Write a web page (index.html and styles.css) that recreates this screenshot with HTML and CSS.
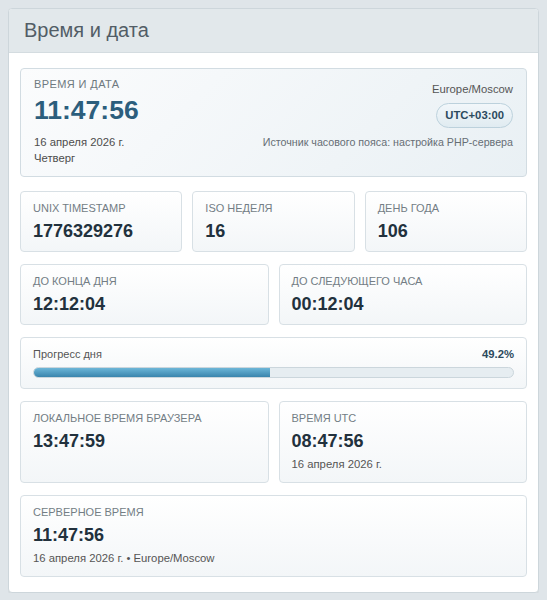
FILE: index.html
```html
<!DOCTYPE html>
<html lang="ru">
<head>
  <meta charset="UTF-8" />
  <title>Время и дата</title>
  <link rel="stylesheet" href="styles.css">
</head>
<body>
<div class="panel">
  <div class="panel-header">
    <h1>Время и дата</h1>
  </div>

  <div class="panel-body">
    <!-- главная карточка -->
    <div class="main-card">
      <div class="main-left">
        <div class="main-label">Время и дата</div>
        <div class="main-time">11:47:56</div>
        <div class="main-date">16 апреля 2026 г.</div>
        <div class="main-date">Четверг</div>
      </div>
      <div class="main-right">
        <div class="tz-name">Europe/Moscow</div>
        <div class="tz-badge">UTC+03:00</div>
        <div class="tz-source">Источник часового пояса: настройка PHP-сервера</div>
      </div>
    </div>

    <div class="grid grid-3">
      <div class="card">
        <div class="card-label">Unix timestamp</div>
        <div class="card-value">1776329276</div>
      </div>
      <div class="card">
        <div class="card-label">ISO неделя</div>
        <div class="card-value">16</div>
      </div>
      <div class="card">
        <div class="card-label">День года</div>
        <div class="card-value">106</div>
      </div>
    </div>

    <div class="grid grid-2">
      <div class="card">
        <div class="card-label">До конца дня</div>
        <div class="card-value">12:12:04</div>
      </div>
      <div class="card">
        <div class="card-label">До следующего часа</div>
        <div class="card-value">00:12:04</div>
      </div>
    </div>

    <!-- прогресс дня -->
    <div class="card progress-card">
      <div class="progress-head">
        <span class="progress-title">Прогресс дня</span>
        <span class="progress-percent">49.2%</span>
      </div>
      <div class="progress-track">
        <div class="progress-fill" style="width: 49.2%"></div>
      </div>
    </div>

    <div class="grid grid-2">
      <div class="card">
        <div class="card-label">Локальное время браузера</div>
        <div class="card-value">13:47:59</div>
      </div>
      <div class="card">
        <div class="card-label">Время UTC</div>
        <div class="card-value">08:47:56</div>
        <div class="card-sub">16 апреля 2026 г.</div>
      </div>
    </div>

    <div class="card">
      <div class="card-label">Серверное время</div>
      <div class="card-value">11:47:56</div>
      <div class="card-sub">16 апреля 2026 г. • Europe/Moscow</div>
    </div>
  </div>
</div>
</body>
</html>
```

FILE: styles.css
```css
* { box-sizing: border-box; margin: 0; padding: 0; }
body {
  margin: 8px;
  font-family: 'Liberation Sans', Arial, sans-serif;
  background: #dfe5e9;
  color: #444;
}

.panel {
  background: #fff;
  border: 1px solid #cdd6db;
  border-radius: 4px;
  box-shadow: 0 1px 2px rgba(0, 0, 0, 0.06);
  overflow: hidden;
}
.panel-header {
  background: #e2e8eb;
  border-bottom: 1px solid #d4dce0;
  padding: 9px 15px 10px;
}
.panel-header h1 {
  font-size: 20px;
  line-height: 24px;
  font-weight: normal;
  color: #525d66;
}
.panel-body {
  display: flex;
  flex-direction: column;
  gap: 12px;
  padding: 15px 11px;
}

/* главная карточка */
.main-card {
  display: flex;
  justify-content: space-between;
  padding: 9px 13px 10px;
  margin-bottom: 2px;
  border: 1px solid #d2dce2;
  border-radius: 4px;
  background: linear-gradient(135deg, #fbfcfd, #e9f0f4);
}
.main-label {
  font-size: 11px;
  line-height: 13px;
  letter-spacing: 0.4px;
  text-transform: uppercase;
  color: #6e7980;
}
.main-time {
  margin-top: 4px;
  font-size: 26.5px;
  line-height: 30px;
  font-weight: bold;
  color: #2c5e7d;
}
.main-date {
  font-size: 11.3px;
  line-height: 16px;
  color: #4d4d4d;
}
.main-time + .main-date {
  margin-top: 9px;
}
.main-right {
  display: flex;
  flex-direction: column;
  align-items: flex-end;
}
.tz-name {
  margin-top: 3px;
  font-size: 11.3px;
  line-height: 16px;
  color: #555;
}
.tz-badge {
  margin-top: 6px;
  height: 25px;
  line-height: 23px;
  padding: 0 8px;
  border: 1px solid #bcd1dc;
  border-radius: 13px;
  background: linear-gradient(to bottom, #f2f7fa, #e0ebf1);
  font-size: 11.3px;
  font-weight: bold;
  color: #2c4a5e;
}
.tz-source {
  margin-top: 6px;
  font-size: 10.7px;
  line-height: 16px;
  color: #666e75;
}

/* карточки */
.grid {
  display: grid;
  gap: 10px;
}
.grid-3 { grid-template-columns: repeat(3, 1fr); }
.grid-2 { grid-template-columns: repeat(2, 1fr); }

.card {
  padding: 10px 12px;
  border: 1px solid #d8e0e5;
  border-radius: 4px;
  background: linear-gradient(to bottom, #fff, #f3f6f8);
}
.card-label {
  font-size: 11px;
  line-height: 13px;
  text-transform: uppercase;
  color: #737d85;
}
.card-value {
  margin-top: 6px;
  font-size: 18px;
  line-height: 20px;
  font-weight: bold;
  color: #22313d;
}
.card-sub {
  margin-top: 6px;
  font-size: 11.3px;
  line-height: 15px;
  color: #555;
}

/* прогресс */
.progress-head {
  display: flex;
  justify-content: space-between;
  align-items: baseline;
  line-height: 13px;
}
.progress-title {
  font-size: 11px;
  color: #555;
}
.progress-percent {
  font-size: 11.3px;
  font-weight: bold;
  color: #2c4a5e;
}
.progress-track {
  margin-top: 6px;
  height: 11px;
  border: 1px solid #cbd6dc;
  border-radius: 6px;
  background: #e6edf1;
  overflow: hidden;
}
.progress-fill {
  height: 100%;
  background: linear-gradient(to bottom, #6cb6d8, #3a85ad);
}
```
